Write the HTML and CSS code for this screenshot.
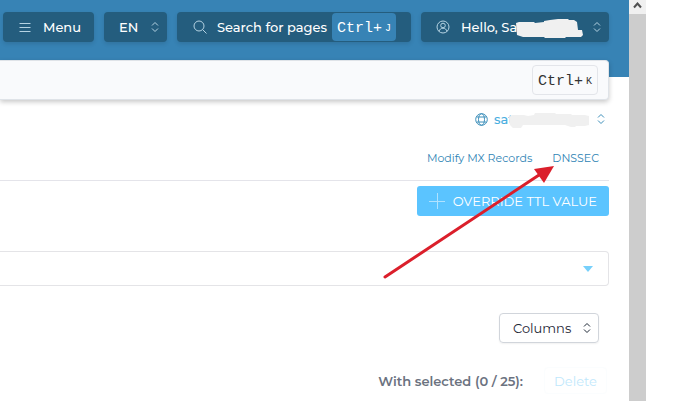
FILE: index.html
```
<!DOCTYPE html>
<html lang="en">
<head>
	<meta charset="UTF-8">
	<title>DNS Management</title>
	<link rel="stylesheet" href="styles.css">
</head>
<body>
	<div class="page">
		<header class="topbar">
			<button class="btn btn-menu" type="button">
				<svg class="icon" width="12" height="12" viewBox="0 0 12 12"><path d="M0.5 2.5h11M0.5 6.5h11M0.5 10.5h11"/></svg>
				<span>Menu</span>
			</button>
			<button class="btn btn-lang" type="button">
				<span>EN</span>
				<svg class="icon" width="8" height="12" viewBox="0 0 8 12"><path d="M1 4.500l3-3 3 3M1 7.500l3 3 3-3"/></svg>
			</button>
			<button class="btn btn-search" type="button">
				<svg class="icon" width="14" height="14" viewBox="0 0 14 14"><circle cx="6" cy="6" r="5"/><path d="M9.500 9.500l4 4"/></svg>
				<span class="grow">Search for pages</span>
				<kbd class="key key-blue">Ctrl+<small>J</small></kbd>
			</button>
			<button class="btn btn-user" type="button">
				<svg class="icon" width="14" height="14" viewBox="0 0 14 14"><circle cx="7" cy="7" r="6"/><circle cx="7" cy="5.500" r="2.300"/><path d="M3 11.400c.5-2 2-3.200 4-3.200s3.500 1.200 4 3.200"/></svg>
				<span class="grow name">Hello, Sat
					<svg class="mask mask-user" width="67" height="20" viewBox="0 0 67 20"><path d="M0 4l3-1 15 0 1 1 9-1 0-1 6-1 8-1 10 0 1 1 5 0 3 2 1 8 4 0 1 5-2 2-15 0-1 1-20 0-1-1-21 0-6-2z"/></svg>
				</span>
				<svg class="icon" width="8" height="12" viewBox="0 0 8 12"><path d="M1 4.500l3-3 3 3M1 7.500l3 3 3-3"/></svg>
			</button>
		</header>

		<label class="finder">
			<input class="finder-input" type="text" aria-label="Search">
			<kbd class="key key-line">Ctrl+<small>K</small></kbd>
		</label>

		<main class="content">
			<div class="domain-row">
				<button class="domain" type="button">
					<svg class="icon" width="13" height="13" viewBox="0 0 13 13"><circle cx="6.500" cy="6.500" r="5.800"/><ellipse cx="6.500" cy="6.500" rx="3" ry="5.800"/><path d="M1.500 4h10M1.500 9h10"/></svg>
					<span class="grow name">sat
						<svg class="mask mask-domain" width="81" height="15" viewBox="0 0 81 15"><path d="M0 4l3-2 12 0 4 1 6-1 1-2 20 0 1 1 15 0 1 1 13 0 4 1 0 9-4 1-9 0-1 1-4 0-6-2-30 0-12 0-2 3-8 0-3-3z"/></svg>
					</span>
					<svg class="icon" width="8" height="12" viewBox="0 0 8 12"><path d="M1 4.500l3-3 3 3M1 7.500l3 3 3-3"/></svg>
				</button>
			</div>
			<nav class="tabs">
				<a href="#mx">Modify MX Records</a>
				<a href="#dnssec">DNSSEC</a>
			</nav>
			<div class="actions">
				<button class="btn-override" type="button">
					<svg class="icon" width="16" height="16" viewBox="0 0 16 16"><path d="M8.500 0v16M0 8.500h16"/></svg>
					<span>OVERRIDE TTL VALUE</span>
				</button>
			</div>
			<div class="filter">
				<select class="filter-select" aria-label="Filter">
					<option></option>
				</select>
				<svg class="caret" width="10" height="6" viewBox="0 0 10 6"><path d="M0 0h10L5 6z"/></svg>
			</div>
			<div class="table-tools">
				<button class="btn-columns" type="button">
					<span>Columns</span>
					<svg class="icon" width="8" height="12" viewBox="0 0 8 12"><path d="M1 4.500l3-3 3 3M1 7.500l3 3 3-3"/></svg>
				</button>
			</div>
			<div class="bulk">
				<span class="bulk-text">With selected (0 / 25):</span>
				<button class="btn-delete" type="button" disabled>Delete</button>
			</div>
		</main>

		<!-- arrow pointing at the DNSSEC link -->
		<svg class="arrow" width="171" height="114" viewBox="0 0 171 114"><path class="arrow-line" d="M2 112L156 10"/><path class="arrow-head" d="M171 1l-20 3 10 14z"/></svg>
	</div>

	<div class="scrollbar">
		<div class="scroll-up">
			<svg width="9" height="7" viewBox="0 0 9 7"><path d="M1 5.500l3.500-4 3.500 4"/></svg>
		</div>
		<div class="scroll-thumb"></div>
	</div>
</body>
</html>
```
FILE: styles.css
```
*{
	margin:0;
	padding:0;
	box-sizing:border-box;
}
body{
	display:flex;
	min-height:100vh;
	padding-right:33px;
	background:#fff;
	color:#1f2937;
	font:500 13px/20px Montserrat, Inter, "Open Sans", sans-serif;
}
button,
select,
input{
	font:inherit;
	color:inherit;
	border:none;
	background:none;
}
svg{
	display:block;
	flex:none;
}
.icon{
	fill:none;
	stroke:currentColor;
	stroke-width:1;
}
.grow{
	flex:1;
	text-align:left;
}
.page{
	position:relative;
	flex:1;
	min-width:0;
	overflow:hidden;
}

/* top bar */
.topbar{
	display:flex;
	justify-content:flex-end;
	align-items:flex-start;
	gap:10px;
	padding:12px 20px 35px;
	background:#3783b5;
}
.btn{
	display:flex;
	flex:none;
	align-items:center;
	height:30px;
	border-radius:4px;
	background:#245d7e;
	color:#fff;
	white-space:nowrap;
	box-shadow:0 2px 4px rgba(0,0,0,.12);
}
.btn .icon{
	color:#b5d3e3;
}
.btn-menu{
	gap:12px;
	width:91px;
	padding:0 16px;
}
.btn-lang{
	justify-content:space-between;
	width:63px;
	padding:0 8px 0 15px;
}
.btn-search{
	gap:10px;
	width:234px;
	padding:0 15px 0 16px;
}
.btn-search .grow{
	min-width:0;
	margin-right:-5px;
}
.btn-user{
	gap:11px;
	width:188px;
	padding:0 8px 0 15px;
}
.name{
	position:relative;
}
.mask{
	position:absolute;
	fill:#f0f0f0;
}
.mask-user{
	top:2px;
	left:55px;
}
.mask-domain{
	top:4px;
	left:15px;
}
.key{
	display:flex;
	align-items:center;
	gap:3px;
	padding:4px 5px 0;
	border-radius:4px;
	font:400 15px/24px "Liberation Mono", "Courier New", monospace;
}
.key small{
	font-size:10px;
}
.key-blue{
	background:#3783b5;
}
.key-line{
	border:1px solid #e3e5ea;
	color:#333;
}

/* finder overlaps the blue bar */
.finder{
	position:relative;
	display:flex;
	align-items:center;
	height:40px;
	margin:-17px 20px 0 0;
	padding-right:10px;
	border:1px solid #dfe3e8;
	border-left:none;
	border-radius:0 4px 4px 0;
	background:#f9fafc;
	box-shadow:0 2px 5px rgba(0,0,0,.22);
}
.finder-input{
	flex:1;
	min-width:0;
	height:100%;
	outline:none;
}

/* content */
.content{
	padding:9px 20px 0 0;
}
.domain-row{
	display:flex;
	justify-content:flex-end;
}
.domain{
	display:flex;
	align-items:center;
	gap:6px;
	width:134px;
	padding-right:4px;
	color:#4aaee0;
}
.domain .icon{
	color:#3d8fba;
}
.tabs{
	display:flex;
	justify-content:flex-end;
	gap:20px;
	padding:19px 10px 12px 0;
	border-bottom:1px solid #e4e4ea;
	font-size:11px;
	font-weight:400;
}
.tabs a{
	color:#2f84b5;
	text-decoration:none;
}
.actions{
	display:flex;
	justify-content:flex-end;
	padding-top:5px;
}
.btn-override{
	display:flex;
	align-items:center;
	justify-content:space-between;
	width:192px;
	height:30px;
	padding:0 12px;
	border-radius:3px;
	background:#5bc4ff;
	color:#fff;
	font-weight:400;
	white-space:nowrap;
}
.btn-override .icon{
	color:#b0e2ff;
}
.filter{
	display:grid;
	align-items:center;
	height:35px;
	margin-top:35px;
	border:1px solid #e4e4e7;
	border-left:none;
	border-radius:0 4px 4px 0;
}
.filter-select,
.caret{
	grid-area:1 / 1;
}
.filter-select{
	width:100%;
	height:100%;
	appearance:none;
}
.caret{
	justify-self:end;
	margin-right:15px;
	fill:#77d0fb;
	pointer-events:none;
}
.table-tools{
	display:flex;
	justify-content:flex-end;
	padding:27px 10px 0 0;
}
.btn-columns{
	display:flex;
	align-items:center;
	justify-content:space-between;
	width:100px;
	height:30px;
	padding:0 7px 0 13px;
	border:1px solid #d1d5db;
	border-radius:4px;
	font-weight:400;
	box-shadow:0 1px 2px rgba(0,0,0,.06);
}
.bulk{
	display:flex;
	justify-content:flex-end;
	align-items:center;
	gap:21px;
	padding:24px 2px 0 0;
}
.bulk-text{
	color:#6b7280;
	font-weight:600;
}
.btn-delete{
	width:63px;
	height:27px;
	border:1px solid #fbfdfe;
	border-radius:4px;
	color:#bfe8fc;
	font-weight:400;
}

.arrow{
	position:absolute;
	top:165px;
	left:383px;
	pointer-events:none;
}
.arrow-line{
	stroke:#db1f2b;
	stroke-width:3;
	stroke-linecap:round;
}
.arrow-head{
	fill:#db1f2b;
}

/* scrollbar */
.scrollbar{
	display:flex;
	flex-direction:column;
	flex:none;
	width:17px;
	background:#f0f0f0;
}
.scroll-up{
	display:flex;
	justify-content:center;
	padding:2px 0 5px;
	fill:none;
	stroke:#505050;
	stroke-width:2;
}
.scroll-thumb{
	flex:1;
	background:#cdcdcd;
}
```
